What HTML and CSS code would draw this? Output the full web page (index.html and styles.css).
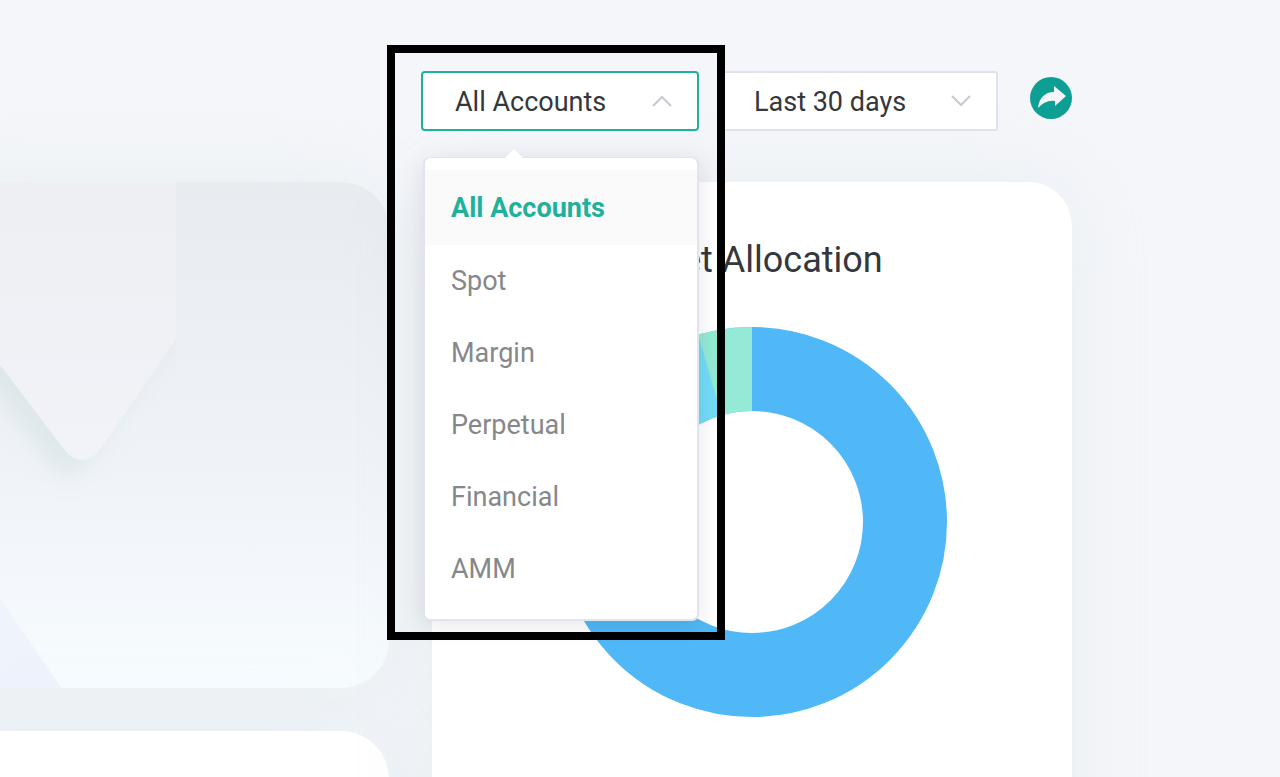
FILE: index.html
```
<!DOCTYPE html>
<html lang="en">

<head>
    <meta charset="UTF-8">
    <title>Asset Allocation</title>
    <link rel="stylesheet" href="styles.css">
</head>

<body>
    <div class="page">
        <div class="toolbar">
            <div class="select-box active">
                <select class="select" aria-label="Account">
                    <option>All Accounts</option>
                    <option>Spot</option>
                    <option>Margin</option>
                    <option>Perpetual</option>
                    <option>Financial</option>
                    <option>AMM</option>
                </select>
                <svg class="arrow" viewBox="0 0 20 12"><path d="M1 11L10 2L19 11" /></svg>

                <div class="menu">
                    <button class="menu-item selected" type="button">All Accounts</button>
                    <button class="menu-item" type="button">Spot</button>
                    <button class="menu-item" type="button">Margin</button>
                    <button class="menu-item" type="button">Perpetual</button>
                    <button class="menu-item" type="button">Financial</button>
                    <button class="menu-item" type="button">AMM</button>
                </div>
                <div class="highlight"></div>
            </div>

            <div class="select-box">
                <select class="select" aria-label="Period">
                    <option>Last 30 days</option>
                </select>
                <svg class="arrow" viewBox="0 0 20 12"><path d="M1 1L10 10L19 1" /></svg>
            </div>

            <button class="share" type="button" aria-label="Share">
                <svg viewBox="0 0 42 42">
                    <circle cx="21" cy="21" r="21" fill="#0d9f94" />
                    <path d="M24 9L36 19L25 29V24C18 23 13 26 8 31C9 21 15 15 24 15Z" fill="#f5f6fa" />
                </svg>
            </button>
        </div>

        <div class="content">
            <div class="left">
                <div class="card banner">
                    <svg class="banner-art" viewBox="0 0 389 507" preserveAspectRatio="xMinYMin slice">
                        <defs>
                            <linearGradient id="shape" x1="0" y1="0" x2="0" y2="1">
                                <stop offset="0" stop-color="#edeef2" />
                                <stop offset="1" stop-color="#f2f3f8" />
                            </linearGradient>
                            <filter id="shadow" x="-50%" y="-20%" width="200%" height="150%">
                                <feDropShadow dx="-14" dy="16" stdDeviation="10" flood-color="#cfdfdf" flood-opacity="0.5" />
                            </filter>
                            <clipPath id="clip"><rect width="176" height="507" /></clipPath>
                        </defs>
                        <g clip-path="url(#clip)">
                            <path d="M-60 -40H240V64L104 262Q82 294 60 262L-60 104Z" fill="url(#shape)" filter="url(#shadow)" />
                        </g>
                        <path d="M0 418L8 428L62 507H0Z" fill="#eff3fc" />
                    </svg>
                </div>
                <div class="card"></div>
            </div>

            <div class="card chart-card">
                <h2>Asset Allocation</h2>
                <svg class="donut" viewBox="0 0 390 390">
                    <g fill="none" stroke-width="84" transform="rotate(-90 195 195)">
                        <circle cx="195" cy="195" r="153" pathLength="360" stroke="#50b8f7" />
                        <circle cx="195" cy="195" r="153" pathLength="360" stroke="#73dbf7" stroke-dasharray="55 305" stroke-dashoffset="-290" />
                        <circle cx="195" cy="195" r="153" pathLength="360" stroke="#94ead5" stroke-dasharray="16 344" stroke-dashoffset="-344" />
                    </g>
                </svg>
            </div>
        </div>
    </div>
</body>

</html>
```
FILE: styles.css
```
* {
    box-sizing: border-box;
}

body {
    margin: 0;
    height: 100vh;
    overflow: hidden;
    background-color: #f5f6fa;
    font-family: Roboto, "Liberation Sans", sans-serif;
}

.page {
    padding: 71px 208px 0 0;
}

.toolbar {
    display: flex;
    justify-content: flex-end;
    position: relative;
    z-index: 1;
}

.select-box {
    position: relative;
    width: 278px;
    height: 60px;
    margin-right: 21px;
}

.select-box + .select-box {
    margin-right: 32px;
}

.select-box.active {
    z-index: 2;
}

.select {
    appearance: none;
    width: 100%;
    height: 100%;
    padding: 2px 32px 0;
    border: 2px solid #dfe2ee;
    border-radius: 3px;
    background-color: #fff;
    color: #34373c;
    font-family: inherit;
    font-size: 27px;
}

.active .select {
    border-color: #1fb19c;
    border-radius: 4px;
}

.arrow {
    position: absolute;
    top: 24px;
    right: 27px;
    width: 20px;
    height: 12px;
    fill: none;
    stroke: #c6cad6;
    stroke-width: 2;
    pointer-events: none;
}

.share {
    width: 42px;
    height: 42px;
    margin-top: 6px;
    padding: 0;
    border: none;
    background: none;
    cursor: pointer;
}

.share svg {
    display: block;
}

.menu {
    position: absolute;
    top: 86px;
    left: 2px;
    width: 276px;
    padding: 12px 0 14px;
    border: 2px solid #e1e4ee;
    border-top-width: 1px;
    border-radius: 7px;
    background-color: #fff;
    box-shadow: 0 4px 24px rgba(0, 0, 0, 0.1);
}

/* little triangle above the menu */
.menu::before {
    content: '';
    position: absolute;
    top: -9px;
    left: 79px;
    border: 10px solid transparent;
    border-top: none;
    border-bottom-color: #fff;
}

.menu-item {
    display: block;
    width: 100%;
    height: 72px;
    padding: 0 26px;
    border: none;
    background: none;
    color: #85888b;
    font-family: inherit;
    font-size: 27px;
    text-align: left;
    cursor: pointer;
}

.menu-item.selected {
    height: 75px;
    background-color: #fafafa;
    color: #1fb19c;
    font-weight: bold;
}

.highlight {
    position: absolute;
    top: -26px;
    left: -34px;
    width: 338px;
    height: 595px;
    border: 8px solid #000;
    pointer-events: none;
}

/* the left cards run out past the window edge */
.content {
    display: grid;
    grid-template-columns: 1fr 640px;
    gap: 43px;
    margin: 51px 0 0 -100px;
}

.left {
    display: flex;
    flex-direction: column;
    gap: 43px;
}

.card {
    min-height: 300px;
    border-radius: 44px;
    background-color: #fff;
    box-shadow: 0 0 80px rgba(200, 222, 226, 0.3);
}

.left .card {
    border-radius: 48px;
}

.left .banner {
    overflow: hidden;
    padding-left: 100px;
    background: linear-gradient(#e8ebf0, #eff3f8 55%, #f7fcff);
}

.banner-art {
    display: block;
    width: 100%;
    height: 506px;
}

.chart-card {
    padding: 57px 40px 80px;
    text-align: center;
}

.chart-card h2 {
    margin: 0 0 46px;
    color: #34373c;
    font-size: 36px;
    font-weight: normal;
    line-height: 42px;
}

.donut {
    display: block;
    width: 390px;
    height: 390px;
    margin: 0 auto;
}
```
